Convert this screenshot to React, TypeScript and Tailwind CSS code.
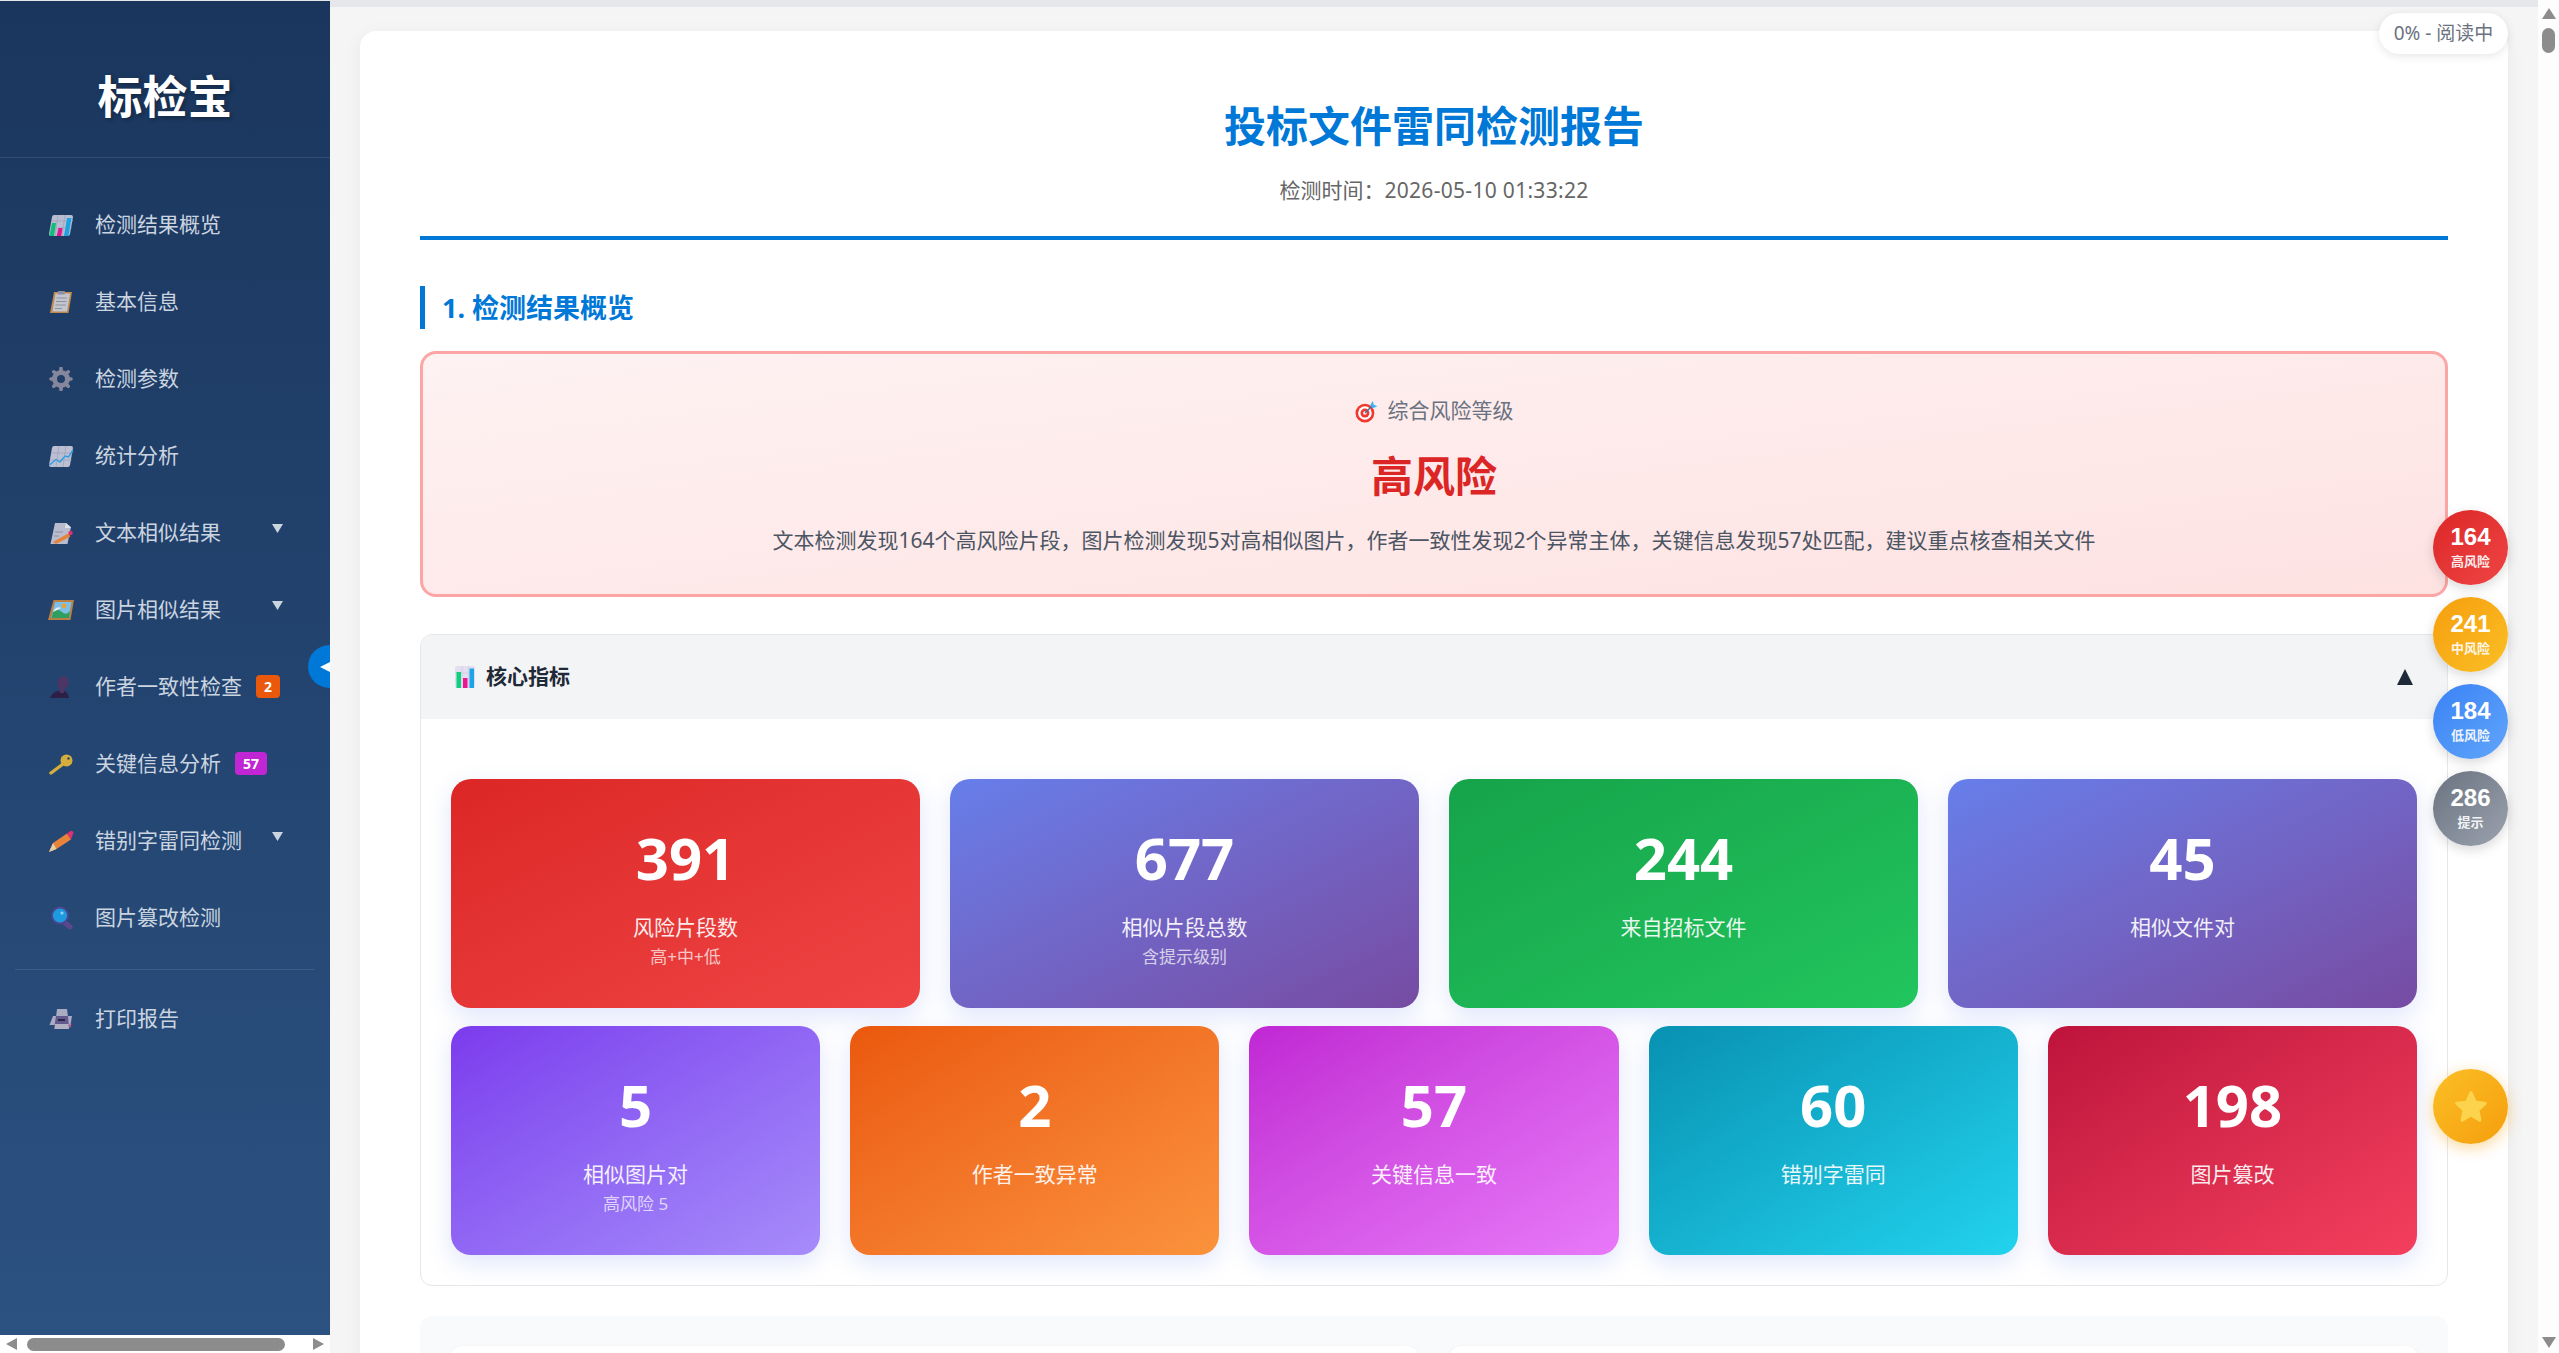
const sans = "font-['Noto_Sans','Noto_Sans_CJK_SC',sans-serif]";

function ChartIcon() {
  return (
    <svg viewBox="0 0 26 24" className="h-full w-full">
      <path d="M6 2h17q2 0 2 2l-3 17q-.4 2-2 2H3q-2 0-2-2L4 4q.3-2 2-2z" fill="#b9bdd2" />
      <path d="M4 8h21M2.5 15h21M10 2 7 23M17 2l-3 21" stroke="#9ea3bd" strokeWidth="0.8" />
      <path d="M4 10h4l-2 13H1.500z" fill="#0fbf78" />
      <path d="M10.500 15h4l-1.300 8h-4.500z" fill="#e0188c" />
      <path d="M19 5h4.500L20.500 23H16z" fill="#1ba4e2" />
    </svg>
  );
}

function ClipboardIcon() {
  return (
    <svg viewBox="0 0 26 24" className="h-full w-full">
      <path d="M6 2h18l-3.500 21H2z" fill="#c08a4c" />
      <path d="M7.500 3.500h14.500l-3 18H4.500z" fill="#c4c6cf" />
      <path d="M10 1h7l-.5 3.500H9.500z" fill="#8d90a0" />
      <path d="M8.500 8h10.500M8 11.500h10.500M7.500 15h10.500M7 18.500h7" stroke="#8d90a0" strokeWidth="1.200" />
    </svg>
  );
}

function GearIcon() {
  return (
    <svg viewBox="0 0 26 24" className="h-full w-full">
      <circle cx="13" cy="12" r="6.500" fill="none" stroke="#85879c" strokeWidth="5" />
      <path
        d="M13 1.500v4M13 18.500v4M3 12h4M19 12h4M5.800 4.800l2.800 2.800M17.400 16.400l2.800 2.800M20.200 4.800l-2.800 2.800M8.600 16.400l-2.800 2.800"
        stroke="#85879c"
        strokeWidth="3.600"
        strokeLinecap="round"
      />
    </svg>
  );
}

function TrendIcon() {
  return (
    <svg viewBox="0 0 26 24" className="h-full w-full">
      <path d="M6 2h17q2 0 2 2l-3 17q-.4 2-2 2H3q-2 0-2-2L4 4q.3-2 2-2z" fill="#bcbfd3" />
      <path d="M3.500 9h21M2.500 16h21M11 2 8 23M18 2l-3 21" stroke="#9ea3bd" strokeWidth="0.8" />
      <path d="M1.500 21 8 15.500l4 2.500 5-6 3.500 1L25 6" fill="none" stroke="#2f9fe0" strokeWidth="1.400" />
    </svg>
  );
}

function NoteIcon() {
  return (
    <svg viewBox="0 0 26 24" className="h-full w-full">
      <path d="M7 2h11l5 4-3.500 17H2.500z" fill="#b9bccd" />
      <path d="M18 2l-1 5h6z" fill="#e3e4ea" />
      <path d="M7 11h8M6 15h5" stroke="#8c90a6" strokeWidth="1.200" />
      <path d="M5 21 20 12.500l2.500 3L8 23z" fill="#e8833a" />
      <circle cx="22.500" cy="12" r="2.200" fill="#e0306f" />
    </svg>
  );
}

function PictureIcon() {
  return (
    <svg viewBox="0 0 26 22" className="h-full w-full">
      <path d="M5.500 1H26l-3.500 20H0z" fill="#b98045" />
      <path d="M7 3h16.500l-2.800 16H3.200z" fill="#7cc0e8" />
      <path d="M3.500 19 5 13q5-4 9 0t8-1l-1.200 7z" fill="#2f9e5f" />
      <path d="M6 11q3-4 7-2l-8 4z" fill="#e8eef2" />
      <circle cx="16" cy="7" r="2.400" fill="#e9a23a" />
    </svg>
  );
}

function PersonIcon() {
  return (
    <svg viewBox="0 0 26 24" className="h-full w-full">
      <ellipse cx="15" cy="7.500" rx="5.500" ry="6.500" fill="#4d3566" transform="rotate(12 15 7.500)" />
      <path d="M2 23q3-7 9-7h6q3 2 4 7z" fill="#2b1f45" />
      <path d="M11 11l6 1-1 6h-4z" fill="#4d3566" />
    </svg>
  );
}

function KeyIcon() {
  return (
    <svg viewBox="0 0 26 24" className="h-full w-full">
      <path d="M3 21 15 12" stroke="#d4ad3c" strokeWidth="3.400" strokeLinecap="round" />
      <circle cx="18.500" cy="8.500" r="6" fill="#d4ad3c" />
      <circle cx="20.500" cy="6.500" r="1.200" fill="#27406b" />
    </svg>
  );
}

function PencilIcon() {
  return (
    <svg viewBox="0 0 26 24" className="h-full w-full">
      <path d="M5 14 19 4.500l4 6L8.500 20 1 23z" fill="#e8833a" />
      <path d="M5 14l3.500 6L1 23z" fill="#e5cfa6" />
      <path d="M19 4.500l3.500-2.500q1.500-.8 2.500.7t-.2 2.800L23 10.500z" fill="#e0306f" />
    </svg>
  );
}

function SearchIcon() {
  return (
    <svg viewBox="0 0 26 24" className="h-full w-full">
      <path d="M16 16l6 5" stroke="#59498c" strokeWidth="5" strokeLinecap="round" />
      <circle cx="12" cy="9.500" r="8" fill="#1c9be0" stroke="#4d4590" strokeWidth="1.800" />
      <circle cx="14" cy="7" r="1.600" fill="#8fd2f2" />
    </svg>
  );
}

function PrinterIcon() {
  return (
    <svg viewBox="0 0 26 24" className="h-full w-full">
      <path d="M9 2h10l1 8H8z" fill="#a9abc2" />
      <path d="M5 9h19l-1.500 9H1.500z" fill="#a9abc2" />
      <path d="M8 9h12l1 13H6z" fill="#63588e" />
      <path d="M10 12h7v2h-7z" fill="#26264a" />
      <path d="M7 17h13.500l.5 5H6.500z" fill="#b0b2c4" />
      <path d="M21.500 17l2-.5-1 4h-1.500z" fill="#d06090" />
    </svg>
  );
}

function DartIcon() {
  return (
    <svg viewBox="0 0 22 22" className="h-full w-full">
      <circle cx="9.500" cy="12.500" r="9" fill="#f0382f" />
      <circle cx="9.500" cy="12.500" r="6.500" fill="#ffffff" />
      <circle cx="9.500" cy="12.500" r="4.300" fill="#f0382f" />
      <circle cx="9.500" cy="12.500" r="1.700" fill="#ffffff" />
      <path d="M9.500 12.500 17 5" stroke="#3d6f9e" strokeWidth="1.200" />
      <path d="M14.500 5 17 1l1 3.500L21.500 6 17 8z" fill="#3eb2f2" />
    </svg>
  );
}

function BarsIcon() {
  return (
    <svg viewBox="0 0 20 22" className="h-full w-full">
      <rect x="0" y="0" width="20" height="22" rx="2" fill="#e3dff0" />
      <path d="M0 7h20M0 14h20M7 0v22M13.500 0v22" stroke="#cfcade" strokeWidth="0.700" />
      <rect x="1.500" y="6" width="4.500" height="16" fill="#0fd07e" />
      <rect x="8" y="12" width="4.500" height="10" fill="#ee1590" />
      <rect x="14.500" y="2.500" width="4.500" height="19.500" fill="#1ba4e8" />
    </svg>
  );
}

const Caret = () => (
  <svg viewBox="0 0 11 9" className="ml-auto mr-[47px] -mt-[8px] h-[9px] w-[11px]">
    <path d="M0 0h11L5.500 9z" fill="#cbd5e0" />
  </svg>
);

const navItems = [
  { label: "检测结果概览", icon: ChartIcon },
  { label: "基本信息", icon: ClipboardIcon },
  { label: "检测参数", icon: GearIcon },
  { label: "统计分析", icon: TrendIcon },
  { label: "文本相似结果", icon: NoteIcon, caret: true },
  { label: "图片相似结果", icon: PictureIcon, caret: true },
  { label: "作者一致性检查", icon: PersonIcon, badge: "2", badgeClass: "w-[24px] bg-[#ea580c]" },
  { label: "关键信息分析", icon: KeyIcon, badge: "57", badgeClass: "w-[32px] bg-[#c026d3]" },
  { label: "错别字雷同检测", icon: PencilIcon, caret: true },
  { label: "图片篡改检测", icon: SearchIcon },
];

function NavRow({ item }: { item: (typeof navItems)[number] }) {
  const Icon = item.icon;
  return (
    <div className="flex h-[77px] shrink-0 items-center pl-[48px] text-[21px] text-[#cbd5e0]">
      <span className="mr-[21px] h-[24px] w-[26px] shrink-0">
        <Icon />
      </span>
      <span className="whitespace-nowrap">{item.label}</span>
      {item.badge && (
        <span
          className={`ml-[14px] flex h-[23px] items-center justify-center rounded-[4px] text-[14px] font-bold text-white ${item.badgeClass}`}
        >
          {item.badge}
        </span>
      )}
      {item.caret && <Caret />}
    </div>
  );
}

function Sidebar() {
  return (
    <aside className="relative mt-px flex w-[330px] shrink-0 flex-col overflow-hidden bg-gradient-to-b from-[#1a365d] to-[#2c5282]">
      <div className="flex h-[157px] shrink-0 items-center justify-center border-b border-white/10 pt-[36px]">
        <span className="text-[45px] font-bold text-white [text-shadow:2px_2px_4px_rgba(0,0,0,0.3)]">标检宝</span>
      </div>
      <nav className="flex flex-1 flex-col pt-[28px]">
        {navItems.map((item) => (
          <NavRow key={item.label} item={item} />
        ))}
        <div className="mx-[15px] mb-[10px] mt-[13px] h-px shrink-0 bg-white/10" />
        <NavRow item={{ label: "打印报告", icon: PrinterIcon }} />
      </nav>
      {/* horizontal scrollbar of the sidebar */}
      <div className="flex h-[18px] shrink-0 items-center bg-white pl-[6px] pr-[6px]">
        <svg viewBox="0 0 11 12" className="h-[12px] w-[11px]">
          <path d="M11 0v12L0 6z" fill="#8c8c8c" />
        </svg>
        <div className="ml-[10px] h-[13px] w-[258px] rounded-full bg-[#8c8c8c]" />
        <svg viewBox="0 0 11 12" className="ml-auto h-[12px] w-[11px]">
          <path d="M0 0v12l11-6z" fill="#8c8c8c" />
        </svg>
      </div>
      <button className="absolute left-[308px] top-[644px] flex h-[43px] w-[44px] items-center rounded-full bg-[#0078d7] pl-[12px]">
        <svg viewBox="0 0 10 10" className="h-[10px] w-[10px]">
          <path d="M0 5 10 0v10z" fill="#ffffff" />
        </svg>
      </button>
    </aside>
  );
}

const topStats = [
  { value: "391", label: "风险片段数", sub: "高+中+低", bg: "from-[#dc2626] to-[#ef4444]" },
  { value: "677", label: "相似片段总数", sub: "含提示级别", bg: "from-[#667eea] to-[#764ba2]" },
  { value: "244", label: "来自招标文件", bg: "from-[#16a34a] to-[#22c55e]" },
  { value: "45", label: "相似文件对", bg: "from-[#667eea] to-[#764ba2]" },
];

const bottomStats = [
  { value: "5", label: "相似图片对", sub: "高风险 5", bg: "from-[#7c3aed] to-[#a78bfa]" },
  { value: "2", label: "作者一致异常", bg: "from-[#ea580c] to-[#fb923c]" },
  { value: "57", label: "关键信息一致", bg: "from-[#c026d3] to-[#e879f9]" },
  { value: "60", label: "错别字雷同", bg: "from-[#0891b2] to-[#22d3ee]" },
  { value: "198", label: "图片篡改", bg: "from-[#be123c] to-[#f43f5e]" },
];

function StatCard({ stat }: { stat: { value: string; label: string; sub?: string; bg: string } }) {
  return (
    <div
      className={`flex h-[229px] flex-col items-center rounded-[20px] bg-gradient-to-br pt-[37px] text-white shadow-[0_8px_24px_rgba(102,126,234,0.2)] ${stat.bg}`}
    >
      <div className="h-[84px] text-[58px] font-bold leading-[84px]">{stat.value}</div>
      <div className="mt-[11px] text-[21px] leading-[32px] opacity-90">{stat.label}</div>
      {stat.sub && <div className="mt-[2px] text-[17px] leading-[24px] opacity-70">{stat.sub}</div>}
    </div>
  );
}

const floats = [
  { value: "164", label: "高风险", bg: "from-[#dc2626] to-[#ef4444]" },
  { value: "241", label: "中风险", bg: "from-[#f59e0b] to-[#fbbf24]" },
  { value: "184", label: "低风险", bg: "from-[#3b82f6] to-[#60a5fa]" },
  { value: "286", label: "提示", bg: "from-[#6b7280] to-[#9ca3af]" },
];

function ReportCard() {
  return (
    <div className="rounded-[16px] bg-white px-[60px] pb-[40px] pt-[60px] shadow-[0_4px_20px_rgba(0,0,0,0.05)]">
      <div className="border-b-4 border-[#0078d7] pb-[30px] text-center">
        <h1 className="text-[42px] font-bold leading-[70px] text-[#0078d7]">投标文件雷同检测报告</h1>
        <p className="mt-[13px] text-[21px] leading-[32px] text-[#666666]">
          检测时间：<span className="tracking-[0.3px]">2026-05-10 01:33:22</span>
        </p>
      </div>

      <h2 className="mt-[46px] border-l-[5px] border-[#0078d7] pl-[17px] text-[27px] font-bold leading-[43px] text-[#0078d7]">
        1. 检测结果概览
      </h2>

      <div className="mt-[22px] flex h-[246px] flex-col items-center rounded-[16px] border-[3px] border-[#fca5a5] bg-gradient-to-br from-[#fef2f2] to-[#fee2e2] pt-[41px]">
        <div className="flex h-[32px] items-center gap-[10px] text-[21px] text-[#6b7280]">
          <span className="h-[23px] w-[23px]">
            <DartIcon />
          </span>
          综合风险等级
        </div>
        <div className="mt-[16px] text-[42px] font-bold leading-[66px] text-[#dc2626]">高风险</div>
        <p className="mt-[15px] text-[21px] leading-[32px] text-[#4b5563]">
          文本检测发现164个高风险片段，图片检测发现5对高相似图片，作者一致性发现2个异常主体，关键信息发现57处匹配，建议重点核查相关文件
        </p>
      </div>

      <section className="mt-[37px] overflow-hidden rounded-[12px] border border-[#e5e7eb]">
        <div className="flex h-[84px] items-center bg-[#f3f4f6] pl-[34px] pr-[34px]">
          <span className="mr-[11px] h-[22px] w-[20px]">
            <BarsIcon />
          </span>
          <span className="text-[21px] font-bold text-[#1f2937]">核心指标</span>
          <svg viewBox="0 0 16 16" className="ml-auto h-[16px] w-[16px]">
            <path d="M8 0l8 16H0z" fill="#1f2937" />
          </svg>
        </div>
        <div className="flex flex-col gap-[18px] p-[30px] pt-[60px]">
          <div className="grid grid-cols-4 gap-[30px]">
            {topStats.map((s) => (
              <StatCard key={s.label} stat={s} />
            ))}
          </div>
          <div className="grid grid-cols-5 gap-[30px]">
            {bottomStats.map((s) => (
              <StatCard key={s.label} stat={s} />
            ))}
          </div>
        </div>
      </section>

      <section className="mt-[30px] rounded-[12px] bg-[#f9fafb] p-[30px]">
        <div className="grid grid-cols-2 gap-[30px]">
          <div className="h-[300px] rounded-[12px] bg-white shadow-sm" />
          <div className="h-[300px] rounded-[12px] bg-white shadow-sm" />
        </div>
      </section>
    </div>
  );
}

function Scrollbar() {
  return (
    <div className="flex w-[21px] shrink-0 flex-col items-center bg-[#fdfdfd] pt-[8px]">
      <svg viewBox="0 0 14 11" className="h-[11px] w-[14px]">
        <path d="M7 0l7 11H0z" fill="#8c8c8c" />
      </svg>
      <div className="mt-[9px] h-[25px] w-[13px] rounded-full bg-[#8c8c8c]" />
      <svg viewBox="0 0 14 11" className="mb-[5px] mt-auto h-[11px] w-[14px]">
        <path d="M0 0h14L7 11z" fill="#8c8c8c" />
      </svg>
    </div>
  );
}

export default function App() {
  return (
    <div className={`flex h-screen w-screen overflow-hidden bg-[#e5e7eb] ${sans}`}>
      <Sidebar />
      <main className="relative min-w-0 flex-1 overflow-hidden bg-[#f5f5f5]">
        <div className="h-[7px] bg-[#e5e7eb]" />
        <div className="px-[30px] pt-[24px]">
          <ReportCard />
        </div>

        <div className="absolute right-[30px] top-[13px] flex h-[41px] w-[129px] items-center justify-center rounded-full bg-white text-[19px] text-[#6b7280] shadow-[0_2px_10px_rgba(0,0,0,0.1)]">
          0% - 阅读中
        </div>

        <div className="absolute right-[30px] top-[510px] flex flex-col gap-[12px] font-['Liberation_Sans','Noto_Sans_CJK_SC',sans-serif]">
          {floats.map((f) => (
            <div
              key={f.label}
              className={`flex h-[75px] w-[75px] flex-col items-center justify-center rounded-full bg-gradient-to-br pb-[2px] text-white shadow-[0_4px_12px_rgba(0,0,0,0.15)] ${f.bg}`}
            >
              <span className="text-[24px] font-bold leading-[28px]">{f.value}</span>
              <span className="mt-[2px] text-[13px] font-bold leading-[18px] opacity-90">{f.label}</span>
            </div>
          ))}
        </div>

        <div className="absolute right-[30px] top-[1069px] flex h-[75px] w-[75px] items-center justify-center rounded-full bg-gradient-to-br from-[#fbbf24] to-[#f59e0b] shadow-[0_4px_15px_rgba(245,158,11,0.4)]">
          <svg viewBox="0 0 24 24" className="h-[38px] w-[38px]">
            <path
              d="M12 3l2.700 6 6.300.7-4.700 4.300 1.300 6.300L12 17l-5.600 3.300 1.300-6.300L3 9.700 9.300 9z"
              fill="#fcd34d"
              stroke="#fcd34d"
              strokeWidth="2"
              strokeLinejoin="round"
            />
          </svg>
        </div>
      </main>
      <Scrollbar />
    </div>
  );
}
